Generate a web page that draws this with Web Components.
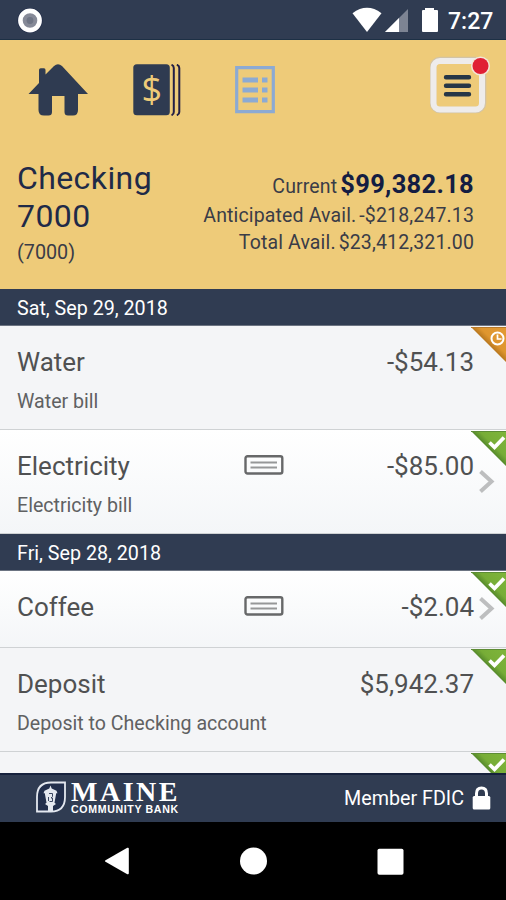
<!DOCTYPE html>
<html lang="en">
<head>
<meta charset="utf-8">
<title>Checking 7000</title>
<style>
  html, body { margin: 0; height: 100%; }
  body {
    font-family: Roboto, "Liberation Sans", sans-serif;
    background: #000;
    overflow: hidden;
  }
</style>
</head>
<body>
<bank-app>
  <status-bar time="7:27"></status-bar>
  <tool-bar></tool-bar>
  <account-summary>
    <span slot="name">Checking 7000</span>
    <span slot="number">(7000)</span>
    <balance-line label="Current" main>$99,382.18</balance-line>
    <balance-line label="Anticipated Avail.">-$218,247.13</balance-line>
    <balance-line label="Total Avail.">$23,412,321.00</balance-line>
  </account-summary>
  <txn-list>
    <date-band>Sat, Sep 29, 2018</date-band>
    <txn-row amount="-$54.13" note="Water bill" status="pending" flat>Water</txn-row>
    <txn-row amount="-$85.00" note="Electricity bill" status="cleared" check>Electricity</txn-row>
    <date-band>Fri, Sep 28, 2018</date-band>
    <txn-row amount="-$2.04" status="cleared" check>Coffee</txn-row>
    <txn-row amount="$5,942.37" note="Deposit to Checking account" status="cleared" flat>Deposit</txn-row>
    <txn-row status="cleared" flat></txn-row>
  </txn-list>
  <bank-footer>Member FDIC</bank-footer>
  <nav-buttons></nav-buttons>
</bank-app>

<script>
class BankApp extends HTMLElement {
  connectedCallback() {
    this.attachShadow({ mode: 'open' });
    this.shadowRoot.innerHTML = `
      <style>
        :host {
          display: flex;
          flex-direction: column;
          width: 506px;
          height: 900px;
          overflow: hidden;
        }
      </style>
      <slot></slot>
    `;
  }
}

class StatusBar extends HTMLElement {
  connectedCallback() {
    this.attachShadow({ mode: 'open' });
    this.shadowRoot.innerHTML = `
      <style>
        :host {
          display: flex;
          align-items: center;
          box-sizing: border-box;
          flex: 0 0 40px;
          padding: 0 12px 0 17px;
          background: #303c52;
          border-bottom: 1px solid #1d3045;
          color: #fff;
        }
        svg { display: block; }
        .signals { margin-left: auto; }
        .time {
          width: 46px;
          margin-left: 9px;
          padding-top: 4px;
          font-size: 23px;
          font-weight: 500;
          line-height: 35px;
          white-space: nowrap;
        }
      </style>
      <svg width="26" height="26" viewBox="0 0 26 26">
        <circle cx="13" cy="13.500" r="12.500" fill="#1b2644"/>
        <circle cx="13" cy="13.500" r="9.600" fill="#868a98" stroke="#fff" stroke-width="4.600"/>
        <circle cx="13" cy="13.500" r="3.400" fill="#6f7585"/>
      </svg>
      <svg class="signals" width="88" height="26" viewBox="350 7 88 26">
        <path d="M351.500 13.200Q366 2.300 380.500 13.200L366 32Z" fill="#fff"/>
        <path d="M407 9V32H384Z" fill="#7d8493"/>
        <path d="M398 18V32H384Z" fill="#fff"/>
        <path d="M424 8h9v2h3q1 0 1 1v20q0 1-1 1h-14q-1 0-1-1V11q0-1 1-1h2z" fill="#fff"/>
      </svg>
      <span class="time">${this.getAttribute('time')}</span>
    `;
  }
}

class ToolBar extends HTMLElement {
  connectedCallback() {
    this.attachShadow({ mode: 'open' });
    this.shadowRoot.innerHTML = `
      <style>
        :host {
          display: flex;
          align-items: flex-start;
          box-sizing: border-box;
          flex: 0 0 119px;
          padding: 14px 14px 0 28px;
          background: #eecb79;
        }
        svg { display: block; }
        .home { margin-top: 10px; }
        .money { margin: 10px 0 0 45px; }
        .list { margin: 12px 0 0 54px; }
        .menu { margin-left: auto; }
        .dollar {
          font: 36px "Open Sans", sans-serif;
          fill: #eecb79;
        }
      </style>
      <svg class="home" width="60" height="52" viewBox="28 64 60 52" fill="#2f3b51">
        <path d="M28.500 94L39 83V70q0-1.700 1.700-1.700H44q1.500 0 1.500 1.700v4.600L54 66q4-3.400 8 0L88 94H78v16q0 5.500-5 5.500h-5q-3.500 0-3.500-3.500V96H52v16q0 3.500-3.500 3.500H44q-5.500 0-5.500-5.500V94Z"/>
      </svg>
      <svg class="money" width="48" height="52" viewBox="133 64 48 52">
        <rect x="133.300" y="64.300" width="36.500" height="51" rx="3.500" fill="#2f3b51"/>
        <path d="M171.500 64.800q2.300.7 2.300 3.200v44q0 2.500-2.300 3.200M176.800 64.800q2.500.7 2.500 3.200v44q0 2.500-2.500 3.200" fill="none" stroke="#231f45" stroke-width="2"/>
        <text class="dollar" x="141.600" y="102.300">$</text>
      </svg>
      <svg class="list" width="40" height="48" viewBox="235 66 40 48">
        <path d="M236.700 67.700h36.600v44h-36.600z" fill="none" stroke="#8caad3" stroke-width="3.200"/>
        <path d="M242.500 80h15.500M242.500 90h15.500M242.500 100h15.500M262 80h5.500M262 90h5.500M262 100h5.500" stroke="#8caad3" stroke-width="5"/>
      </svg>
      <svg class="menu" width="62" height="62" viewBox="430 54 62 62">
        <rect x="433" y="60" width="50" height="50" rx="7" fill="none" stroke="#d3c4a5" stroke-width="6.600"/>
        <rect x="433.500" y="61" width="48.500" height="48.500" rx="6.500" fill="none" stroke="#eeeceb" stroke-width="6"/>
        <path d="M446 77.300h23M446 85.800h23M446 94.300h23" stroke="#263747" stroke-width="4.400" stroke-linecap="round"/>
        <circle cx="480.500" cy="66" r="9.600" fill="#f3e6d6"/>
        <circle cx="480.500" cy="66" r="8" fill="#e01f35"/>
      </svg>
    `;
  }
}

class AccountSummary extends HTMLElement {
  connectedCallback() {
    this.attachShadow({ mode: 'open' });
    this.shadowRoot.innerHTML = `
      <style>
        :host {
          display: flex;
          justify-content: space-between;
          box-sizing: border-box;
          flex: 0 0 130px;
          padding: 0 32px 0 17px;
          background: #eecb79;
          color: #1f2a48;
        }
        .name {
          width: 150px;
          font-size: 32px;
          line-height: 38px;
          letter-spacing: .4px;
        }
        .number {
          padding-top: 2px;
          font-size: 19.800px;
          line-height: 31px;
          color: #3a3c47;
        }
        .balances { padding-top: 10px; }
      </style>
      <div>
        <div class="name"><slot name="name"></slot></div>
        <div class="number"><slot name="number"></slot></div>
      </div>
      <div class="balances"><slot></slot></div>
    `;
  }
}

class BalanceLine extends HTMLElement {
  connectedCallback() {
    this.attachShadow({ mode: 'open' });
    this.shadowRoot.innerHTML = `
      <style>
        :host {
          display: flex;
          justify-content: flex-end;
          align-items: baseline;
          gap: 3px;
          font-size: 19.500px;
          line-height: 27px;
          letter-spacing: .14px;
          white-space: nowrap;
          color: #3a3c47;
        }
        :host([main]) { line-height: 31px; }
        :host([main]) .value {
          font-size: 25.500px;
          font-weight: 700;
          letter-spacing: .3px;
          color: #141d42;
        }
      </style>
      <span>${this.getAttribute('label')}</span>
      <span class="value"><slot></slot></span>
    `;
  }
}

class TxnList extends HTMLElement {
  connectedCallback() {
    this.attachShadow({ mode: 'open' });
    this.shadowRoot.innerHTML = `
      <style>
        :host {
          display: flex;
          flex-direction: column;
          flex: 1 1 0;
          min-height: 0;
          overflow: hidden;
          background: #f4f5f7;
        }
      </style>
      <slot></slot>
    `;
  }
}

class DateBand extends HTMLElement {
  connectedCallback() {
    this.attachShadow({ mode: 'open' });
    this.shadowRoot.innerHTML = `
      <style>
        :host {
          display: block;
          box-sizing: border-box;
          flex: 0 0 37px;
          padding: 4px 17px 0;
          background: #303c52;
          border-bottom: 1px solid #6c7482;
          font-size: 19.700px;
          line-height: 32px;
          color: #fff;
        }
      </style>
      <slot></slot>
    `;
  }
}

class StatusCorner extends HTMLElement {
  connectedCallback() {
    const pending = this.getAttribute('status') === 'pending';
    const mark = pending
      ? '<circle cx="26.500" cy="11.500" r="6" stroke-width="2"/><path d="M26.500 7.500v4.500h4" stroke-width="1.700"/>'
      : '<path d="M18.500 11.500l5 4.800L33 6.500" stroke-width="3.700"/>';
    this.attachShadow({ mode: 'open' });
    this.shadowRoot.innerHTML = `
      <style>
        :host { display: block; width: 35px; height: 35px; }
        svg { display: block; }
      </style>
      <svg width="35" height="35" viewBox="0 0 35 35">
        <defs>
          <linearGradient id="fill" x1="0" y1="1" x2="1" y2="0">
            <stop offset=".5" stop-color="${pending ? '#b8771f' : '#55892a'}"/>
            <stop offset=".62" stop-color="${pending ? '#df962f' : '#77ad37'}"/>
            <stop offset="1" stop-color="${pending ? '#e29a35' : '#7fb53b'}"/>
          </linearGradient>
        </defs>
        <path d="M0 0H35V35Z" fill="url(#fill)"/>
        <path d="M0 .5H35" stroke="${pending ? '#b97a2b' : '#5d8c35'}"/>
        <g fill="none" stroke="#fff">${mark}</g>
      </svg>
    `;
  }
}

class TxnRow extends HTMLElement {
  connectedCallback() {
    const note = this.getAttribute('note');
    const check = this.hasAttribute('check');
    this.attachShadow({ mode: 'open' });
    this.shadowRoot.innerHTML = `
      <style>
        :host {
          display: grid;
          position: relative;
          box-sizing: border-box;
          grid-template-columns: 227px 40px 1fr;
          grid-template-rows: 36px;
          flex: 0 0 ${note ? 104 : 77}px;
          padding: 18px 32px 0 17px;
          border-bottom: 1px solid #cfd2d4;
          background: linear-gradient(#fff, #f4f6f8);
          color: #505152;
        }
        :host([flat]) { background: #f4f5f7; }
        .title, .amount {
          font-size: 26px;
          line-height: 36px;
          white-space: nowrap;
        }
        .amount { grid-column: 3; text-align: right; }
        .note {
          grid-column: 1 / -1;
          margin-top: 8px;
          font-size: 19.600px;
          line-height: 28px;
          color: #606162;
        }
        .check { display: block; margin-top: 7px; }
        status-corner { position: absolute; top: 1px; right: 0; }
        .chevron { position: absolute; right: 11px; top: calc(50% - 12px); }
      </style>
      <div class="title"><slot></slot></div>
      ${check ? `
      <svg class="check" width="40" height="20" viewBox="0 0 40 20" fill="none">
        <rect x="1.500" y="1.200" width="36.800" height="17.300" rx="2" stroke="#676869" stroke-width="2.400"/>
        <path d="M6.500 7.500h26.500M6.500 12.500h26.500" stroke="#969798" stroke-width="1.800"/>
      </svg>
      <svg class="chevron" width="16" height="23" viewBox="0 0 16 23">
        <path d="M1.500 1.500L12.500 11.500L1.500 21.500" fill="none" stroke="#bdbebf" stroke-width="4"/>
      </svg>` : ''}
      <div class="amount">${this.getAttribute('amount') || ''}</div>
      ${note ? `<div class="note">${note}</div>` : ''}
      <status-corner status="${this.getAttribute('status')}"></status-corner>
    `;
  }
}

class BankFooter extends HTMLElement {
  connectedCallback() {
    this.attachShadow({ mode: 'open' });
    this.shadowRoot.innerHTML = `
      <style>
        :host {
          display: flex;
          align-items: center;
          box-sizing: border-box;
          flex: 0 0 49px;
          padding: 0 15px 0 35px;
          background: #303c52;
          border-top: 2px solid #17223d;
          color: #fff;
        }
        svg { display: block; overflow: visible; }
        .logo { margin: 0 5px 3px 0; }
        .maine {
          font: 700 28px/20px "Liberation Serif", serif;
          letter-spacing: 2.500px;
        }
        .community {
          margin-top: 1px;
          font: 700 10.600px/12px "Liberation Sans", sans-serif;
          letter-spacing: .65px;
        }
        .brand { white-space: nowrap; margin-bottom: 1px; }
        .member {
          margin-left: auto;
          font-size: 19.700px;
          white-space: nowrap;
        }
        .lock { margin: 0 0 2px 8px; }
      </style>
      <svg class="logo" width="31" height="34" viewBox="35 780 31 34">
        <path d="M37 811.500V797Q37 782.500 51 782.500H65V797Q65 811.500 51 811.500Z" fill="#222f4c" stroke="#e4e8ef" stroke-width="1.800"/>
        <path d="M50.500 785.500l1.200 3 4.800 2.300 1 2.400h-1.300l-1.700 9.500 1.500 1.300-3 2V811h-5v-5l-3-2 1.500-1.300-1.700-9.500h-1.300l1-2.400 4.800-2.300z" fill="#e4e8ef"/>
        <path d="M49 793.500h3.500v3l-1.500 1.500h1.500v3.500h-3M48.500 797v4" fill="none" stroke="#3a4661" stroke-width="1"/>
      </svg>
      <div class="brand">
        <div class="maine">MAINE</div>
        <div class="community">COMMUNITY BANK</div>
      </div>
      <span class="member"><slot></slot></span>
      <svg class="lock" width="19" height="24" viewBox="0 0 19 24">
        <path d="M4.500 11V7.500q0-5.500 5-5.500t5 5.500V11" fill="none" stroke="#fff" stroke-width="3"/>
        <rect x=".7" y="10" width="17.600" height="13.500" rx="1.500" fill="#fff"/>
      </svg>
    `;
  }
}

class NavButtons extends HTMLElement {
  connectedCallback() {
    this.attachShadow({ mode: 'open' });
    this.shadowRoot.innerHTML = `
      <style>
        :host {
          display: flex;
          justify-content: space-between;
          align-items: center;
          box-sizing: border-box;
          flex: 0 0 78px;
          padding: 0 102px 0 104px;
          background: #000;
        }
        svg { display: block; fill: #fff; }
      </style>
      <svg width="26" height="28" viewBox="0 0 26 28"><path d="M1.500 13.200L23.300.8q1.500-.6 1.500 1v24.400q0 1.600-1.500 1L1.500 14.800q-1.300-.8 0-1.600z"/></svg>
      <svg width="28" height="28" viewBox="0 0 28 28"><circle cx="13.500" cy="14" r="13.500"/></svg>
      <svg width="27" height="27" viewBox="0 0 27 27"><rect x=".5" y=".7" width="26" height="26" rx="1.800"/></svg>
    `;
  }
}

customElements.define('bank-app', BankApp);
customElements.define('status-bar', StatusBar);
customElements.define('tool-bar', ToolBar);
customElements.define('account-summary', AccountSummary);
customElements.define('balance-line', BalanceLine);
customElements.define('txn-list', TxnList);
customElements.define('date-band', DateBand);
customElements.define('status-corner', StatusCorner);
customElements.define('txn-row', TxnRow);
customElements.define('bank-footer', BankFooter);
customElements.define('nav-buttons', NavButtons);
</script>
</body>
</html>
